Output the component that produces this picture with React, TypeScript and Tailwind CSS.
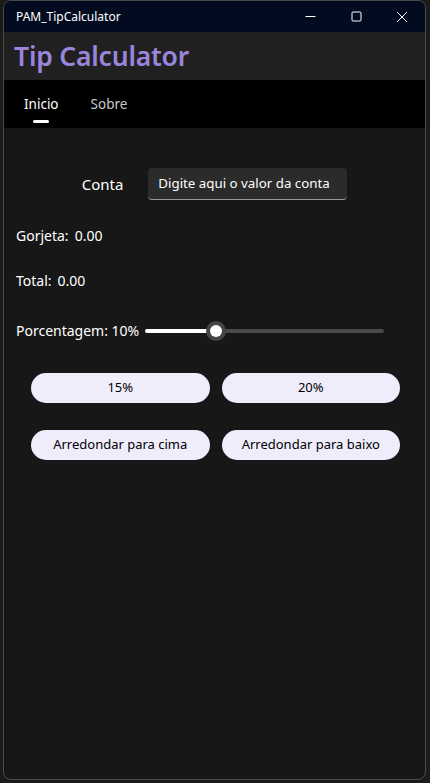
export default function App() {
  return (
    <div className="w-[430px] h-[783px] bg-[#1b1b1b] overflow-hidden" style={{ fontFamily: '"Noto Sans", "Open Sans", sans-serif' }}>
      <div className="ml-[3px] w-[423px] h-[780px] rounded-[8px] border border-[#4a4a4a] overflow-hidden flex flex-col bg-[#171717]">
        {/* Window title bar */}
        <div className="h-[31px] bg-[#020b1f] flex items-center justify-between shrink-0">
          <span className="pl-[12px] text-[12px] text-white">PAM_TipCalculator</span>
          <div className="flex items-center h-full">
            <div className="w-[46px] h-full flex items-center justify-center">
              <svg width="11" height="11" viewBox="0 0 11 11"><path d="M0.5 5.5h10" stroke="#fff" strokeWidth="1" /></svg>
            </div>
            <div className="w-[46px] h-full flex items-center justify-center">
              <svg width="11" height="11" viewBox="0 0 11 11"><rect x="1" y="1" width="9" height="9" rx="1" fill="none" stroke="#fff" strokeWidth="1" /></svg>
            </div>
            <div className="w-[46px] h-full flex items-center justify-center">
              <svg width="12" height="12" viewBox="0 0 12 12"><path d="M1 1l10 10M11 1L1 11" stroke="#fff" strokeWidth="1" /></svg>
            </div>
          </div>
        </div>

        {/* App header */}
        <div className="h-[48px] bg-[#202020] flex items-center pl-[10px] shrink-0">
          <h1 className="text-[26.5px] font-semibold text-[#9b85dc] leading-none tracking-[-0.2px]">Tip Calculator</h1>
        </div>

        {/* Tabs */}
        <div className="h-[48px] bg-black flex items-center gap-[32px] pl-[20px] shrink-0">
          <div className="relative text-[13.5px] text-white">
            Inicio
            <div className="absolute left-1/2 -translate-x-1/2 -bottom-[9px] w-[16px] h-[3px] rounded-full bg-white"></div>
          </div>
          <div className="text-[13.5px] text-[#c8c8c8]">Sobre</div>
        </div>

        {/* Content */}
        <div className="flex flex-col text-white text-[14px]">
          <div className="flex items-center justify-center gap-[25px] mt-[40px]">
            <span className="text-[15px]">Conta</span>
            <div className="w-[199px] h-[32px] rounded-[4px] bg-[#2b2b2b] border-b border-[#9a9a9a] flex items-center pl-[10px]">
              <span className="text-[13.3px] text-white">Digite aqui o valor da conta</span>
            </div>
          </div>

          <div className="flex gap-[6px] pl-[12px] mt-[25px]">
            <span>Gorjeta:</span>
            <span>0.00</span>
          </div>

          <div className="flex gap-[6px] pl-[12px] mt-[24px]">
            <span>Total:</span>
            <span>0.00</span>
          </div>

          <div className="flex items-center pl-[12px] mt-[29px]">
            <span>Porcentagem: 10%</span>
            <div className="relative ml-[6px] w-[239px] h-[20px] flex items-center">
              <div className="w-full h-[4px] rounded-full bg-[#4a4a4a]"></div>
              <div className="absolute left-0 top-[8px] w-[71px] h-[4px] rounded-full bg-white"></div>
              <div className="absolute left-[61px] top-0 w-[20px] h-[20px] rounded-full bg-[#454545] flex items-center justify-center">
                <div className="w-[12px] h-[12px] rounded-full bg-white"></div>
              </div>
            </div>
          </div>

          <div className="grid grid-cols-2 gap-x-[12px] gap-y-[27px] pl-[27px] pr-[25px] mt-[32px] text-black">
            <button className="h-[30px] rounded-[15px] bg-[#efedfc] text-[13px]">15%</button>
            <button className="h-[30px] rounded-[15px] bg-[#efedfc] text-[13px]">20%</button>
            <button className="h-[30px] rounded-[15px] bg-[#efedfc] text-[13px]">Arredondar para cima</button>
            <button className="h-[30px] rounded-[15px] bg-[#efedfc] text-[13px]">Arredondar para baixo</button>
          </div>
        </div>
      </div>
    </div>
  )
}
